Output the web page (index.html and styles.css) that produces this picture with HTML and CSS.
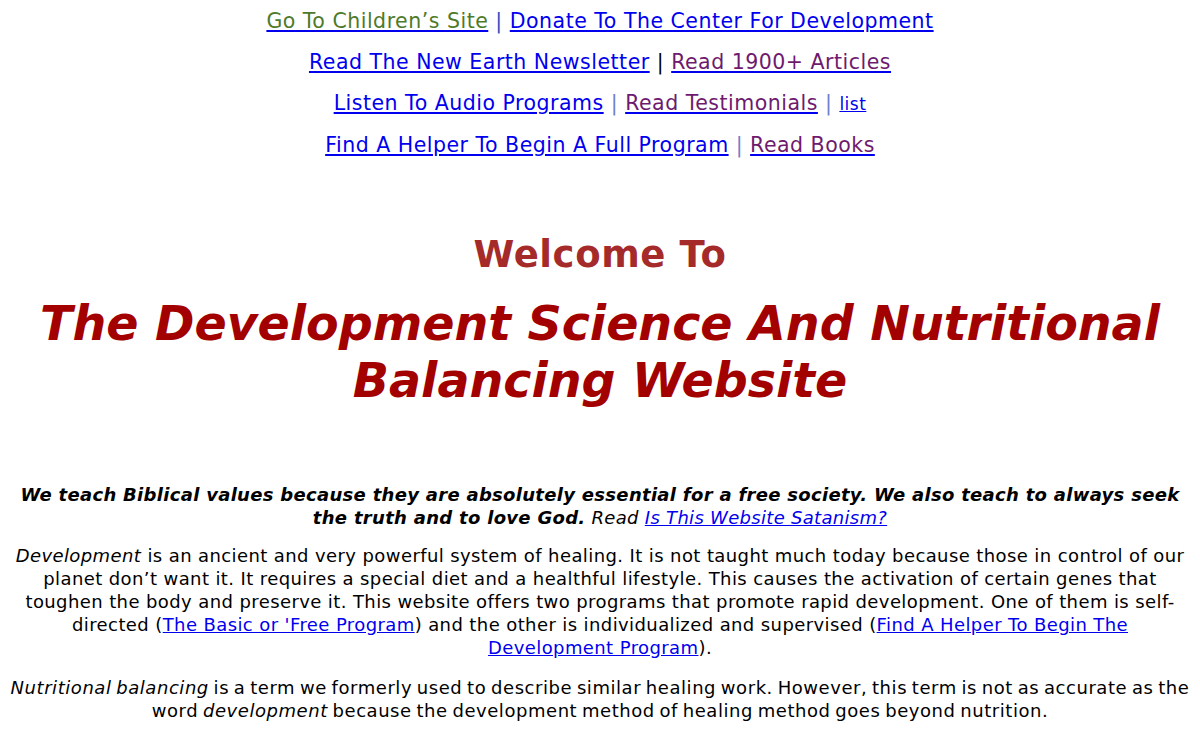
FILE: index.html
```html
<!DOCTYPE html>
<html>
<head>
<meta charset="utf-8">
<link rel="stylesheet" href="styles.css">
</head>
<body>
<div class="nav">
  <p class="nav-line"><a href="#" class="lnk"><span class="green">Go To Children’s Site</span></a> <span class="pipe p1">|</span> <a href="#" class="lnk">Donate To The Center For Development</a></p>
  <p class="nav-line"><a href="#" class="lnk">Read The New Earth Newsletter</a> <span class="pipe p2">|</span> <a href="#" class="lnk visited">Read 1900+ Articles</a></p>
  <p class="nav-line"><a href="#" class="lnk">Listen To Audio Programs</a> <span class="pipe p3">|</span> <a href="#" class="lnk visited">Read Testimonials</a> <span class="pipe p3">|</span> <a href="#" class="lnk small">list</a></p>
  <p class="nav-line"><a href="#" class="lnk">Find A Helper To Begin A Full Program</a> <span class="pipe p3">|</span> <a href="#" class="lnk visited">Read Books</a></p>
</div>
<h2 class="welcome">Welcome To</h2>
<h1 class="title">The Development Science And Nutritional Balancing Website</h1>
<div class="content">
  <p class="lead"><b><i>We teach Biblical values because they are absolutely essential for a free society. We also teach to always seek the truth and to love God.</i></b> <i>Read <a href="#" class="lnk">Is This Website Satanism?</a></i></p>
  <p class="body-p"><i>Development</i> is an ancient and very powerful system of healing. It is not taught much today because those in control of our planet don’t want it. It requires a special diet and a healthful lifestyle. This causes the activation of certain genes that toughen the body and preserve it. This website offers two programs that promote rapid development. One of them is self-directed (<a href="#" class="lnk">The Basic or 'Free Program</a>) and the other is individualized and supervised (<a href="#" class="lnk">Find A Helper To Begin The Development Program</a>).</p>
  <p class="body-p last"><i>Nutritional balancing</i> is a term we formerly used to describe similar healing work. However, this term is not as accurate as the word <i>development</i> because the development method of healing method goes beyond nutrition.</p>
</div>
</body>
</html>
```
FILE: styles.css
```css
html, body {
  margin: 0;
  padding: 0;
  background: #ffffff;
}
body {
  padding: 0 8px;
  font-family: "DejaVu Sans", Verdana, sans-serif;
  color: #000;
  text-align: center;
}
.nav {
  padding-top: 9px;
}
.nav-line {
  margin: 0 0 17px 0;
  font-size: 20.5px;
  line-height: 24px;
  letter-spacing: 0.5px;
}
.lnk {
  color: #0000ee;
  text-decoration: underline;
  text-decoration-color: #0000ee;
}
.green {
  color: #4e7a2a;
}
.visited {
  color: #6e1a6e;
}
.small {
  font-size: 17px;
}
.pipe.p1 { color: #2f4fc0; }
.pipe.p2 { color: #000; }
.pipe.p3 { color: #6c80cc; }
.welcome {
  margin: 76px 0 0 0;
  font-size: 37px;
  line-height: 44px;
  letter-spacing: 0.6px;
  color: #a52a2a;
  font-weight: bold;
}
.title {
  margin: 18px 0 0 0;
  font-size: 47.5px;
  line-height: 57px;
  font-style: italic;
  font-weight: bold;
  color: #a30000;
}
.content {
  margin-top: 74px;
}
.lead {
  margin: 0 0 15px 0;
  font-size: 18px;
  line-height: 23px;
  letter-spacing: 0.3px;
}
.body-p {
  margin: 0 0 17px 0;
  font-size: 18px;
  line-height: 23px;
  letter-spacing: 0.4px;
}
.body-p.last {
  letter-spacing: 0.55px;
  word-spacing: -1.5px;
}
```
